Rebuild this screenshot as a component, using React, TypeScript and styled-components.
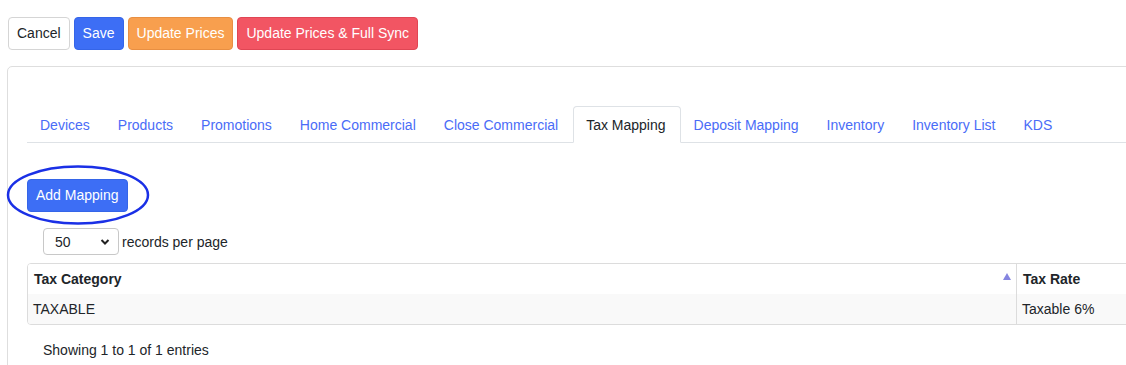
import styled, { createGlobalStyle } from "styled-components";

const GlobalStyle = createGlobalStyle`
  html, body {
    margin: 0;
    padding: 0;
    background: #fff;
    overflow: hidden;
  }
  body {
    font-family: "Liberation Sans", Arial, sans-serif;
    font-size: 14px;
    color: #212529;
  }
`;

const Page = styled.div`
  padding: 17px 0 0 7px;
  width: 1300px;
`;

const Toolbar = styled.div`
  display: flex;
  gap: 4px;
  margin-left: 1px;
  margin-bottom: 16px;
`;

const variants: Record<string, { bg: string; border: string; color: string }> = {
  light: { bg: "#fff", border: "#d5d5d5", color: "#212529" },
  primary: { bg: "#3d6ef5", border: "#3565e8", color: "#fff" },
  warning: { bg: "#f89f4e", border: "#e88f42", color: "#fff" },
  danger: { bg: "#f25563", border: "#e04654", color: "#fff" },
};

const Button = styled.button<{ $variant: string }>`
  font-family: inherit;
  font-size: 14px;
  line-height: 21px;
  padding: 5px 8px;
  border-radius: 4px;
  border: 1px solid ${(p) => variants[p.$variant].border};
  background: ${(p) => variants[p.$variant].bg};
  color: ${(p) => variants[p.$variant].color};
  cursor: pointer;
`;

const Card = styled.div`
  border: 1px solid #dedede;
  border-radius: 5px;
  padding: 39px 0 0 19px;
  height: 280px;
`;

const Tabs = styled.ul`
  display: flex;
  list-style: none;
  margin: 0;
  padding: 0;
  border-bottom: 1px solid #dee2e6;
`;

const Tab = styled.li<{ $active?: boolean }>`
  padding: 9px 14px 7px 12px;
  line-height: 19px;
  margin-bottom: -1px;
  border: 1px solid ${(p) => (p.$active ? "#dee2e6" : "transparent")};
  border-bottom-color: ${(p) => (p.$active ? "#fff" : "transparent")};
  border-radius: 4px 4px 0 0;
  background: ${(p) => (p.$active ? "#fff" : "transparent")};
  color: ${(p) => (p.$active ? "#212529" : "#4a6cf7")};
  cursor: pointer;
`;

const ActionRow = styled.div`
  position: relative;
  margin-top: 36px;
  display: flex;
`;

const Circle = styled.svg`
  position: absolute;
  left: -21px;
  top: -14px;
  pointer-events: none;
`;

const Controls = styled.div`
  display: flex;
  align-items: center;
  gap: 3px;
  margin: 16px 0 0 16px;
`;

const SelectBox = styled.div`
  height: 25px;
  width: 55px;
  border: 1px solid #c8c8c8;
  border-radius: 4px;
  display: flex;
  align-items: center;
  justify-content: space-between;
  padding: 0 8px 0 11px;
  box-sizing: content-box;
`;

const Table = styled.div`
  margin-top: 8px;
  border: 1px solid #dcdcdc;
  border-radius: 4px;
  overflow: hidden;
`;

const Row = styled.div<{ $striped?: boolean; $head?: boolean }>`
  display: grid;
  grid-template-columns: 989px 1fr;
  height: 30px;
  background: ${(p) => (p.$striped ? "#f9f9f9" : "#fff")};
  font-weight: ${(p) => (p.$head ? "bold" : "normal")};
`;

const Cell = styled.div<{ $first?: boolean; $pad?: number }>`
  position: relative;
  display: flex;
  align-items: center;
  padding-left: ${(p) => p.$pad ?? 6}px;
  border-right: ${(p) => (p.$first ? "1px solid #dcdcdc" : "none")};
`;

const SortArrow = styled.span`
  position: absolute;
  right: 5px;
  top: 9px;
  width: 0;
  height: 0;
  border-left: 4px solid transparent;
  border-right: 4px solid transparent;
  border-bottom: 7px solid #8585e0;
`;

const Info = styled.div`
  margin: 16px 0 0 16px;
  line-height: 18px;
`;

const tabs = [
  "Devices",
  "Products",
  "Promotions",
  "Home Commercial",
  "Close Commercial",
  "Tax Mapping",
  "Deposit Mapping",
  "Inventory",
  "Inventory List",
  "KDS",
];

export default function App() {
  return (
    <>
      <GlobalStyle />
      <Page>
        <Toolbar>
          <Button $variant="light">Cancel</Button>
          <Button $variant="primary">Save</Button>
          <Button $variant="warning">Update Prices</Button>
          <Button $variant="danger">Update Prices &amp; Full Sync</Button>
        </Toolbar>
        <Card>
          <Tabs>
            {tabs.map((t) => (
              <Tab key={t} $active={t === "Tax Mapping"}>
                {t}
              </Tab>
            ))}
          </Tabs>
          <ActionRow>
            <Button $variant="primary">Add Mapping</Button>
            <Circle width="146" height="62" viewBox="0 0 146 62">
              <ellipse cx="72" cy="30" rx="70" ry="28.5" fill="none" stroke="#1a30e6" strokeWidth="2.5" />
            </Circle>
          </ActionRow>
          <Controls>
            <SelectBox>
              <span>50</span>
              <svg width="10" height="8" viewBox="0 0 10 8">
                <path d="M1.5 2 L5 5.5 L8.5 2" fill="none" stroke="#222" strokeWidth="2" />
              </svg>
            </SelectBox>
            <span>records per page</span>
          </Controls>
          <Table>
            <Row $head>
              <Cell $first>
                Tax Category
                <SortArrow />
              </Cell>
              <Cell>Tax Rate</Cell>
            </Row>
            <Row $striped>
              <Cell $first $pad={5}>TAXABLE</Cell>
              <Cell $pad={5}>Taxable 6%</Cell>
            </Row>
          </Table>
          <Info>Showing 1 to 1 of 1 entries</Info>
        </Card>
      </Page>
    </>
  );
}
